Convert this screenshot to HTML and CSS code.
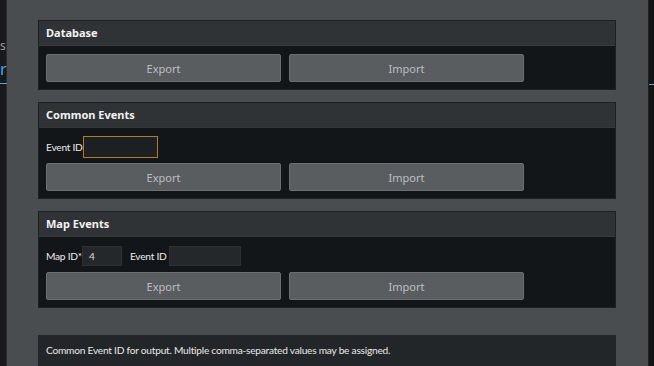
FILE: index.html
```html
<!DOCTYPE html>
<html>
<head>
<meta charset="utf-8">
<link rel="stylesheet" href="styles.css">
</head>
<body>
<div class="screen">
  <div class="bg-left">
    <span class="frag frag-s">s</span>
    <span class="frag frag-r">r</span>
    <span class="frag-line"></span>
  </div>
  <div class="dialog">
    <section class="panel">
      <header class="panel-head">Database</header>
      <div class="panel-body">
        <div class="btn-row">
          <button class="btn">Export</button>
          <button class="btn">Import</button>
        </div>
      </div>
    </section>

    <section class="panel">
      <header class="panel-head">Common Events</header>
      <div class="panel-body">
        <div class="field-row">
          <label class="lbl">Event ID</label>
          <div class="input input-focus input-w75"></div>
        </div>
        <div class="btn-row">
          <button class="btn">Export</button>
          <button class="btn">Import</button>
        </div>
      </div>
    </section>

    <section class="panel">
      <header class="panel-head">Map Events</header>
      <div class="panel-body">
        <div class="field-row">
          <label class="lbl">Map ID*</label>
          <div class="input input-w40">4</div>
          <label class="lbl lbl-gap">Event ID</label>
          <div class="input input-w72"></div>
        </div>
        <div class="btn-row">
          <button class="btn">Export</button>
          <button class="btn">Import</button>
        </div>
      </div>
    </section>

    <div class="info">Common Event ID for output. Multiple comma-separated values may be assigned.</div>
  </div>
  <div class="bg-right">
    <span class="frag-line-r"></span>
  </div>
</div>
</body>
</html>
```
FILE: styles.css
```css
* { box-sizing: border-box; }
html, body {
  margin: 0;
  padding: 0;
  width: 654px;
  height: 366px;
  overflow: hidden;
  background: #141618;
  font-family: "Noto Sans", "Open Sans", sans-serif;
}
.screen {
  display: flex;
  height: 366px;
}
.bg-left {
  width: 7px;
  flex: none;
  background: #17191b;
  position: relative;
  border-right: 1px solid #2a2c2e;
}
.frag {
  position: absolute;
  left: 0;
  font-size: 12px;
  line-height: 1;
}
.frag-s { top: 40px; color: #9a9a9a; }
.frag-r { top: 61px; color: #4aa8e8; font-size: 16px; }
.frag-line {
  position: absolute;
  left: 0;
  top: 83px;
  width: 7px;
  height: 1px;
  background: #4aa8e8;
}
.bg-right {
  width: 6px;
  flex: none;
  background: #121416;
  position: relative;
  border-left: 1px solid #1d1f21;
}
.frag-line-r {
  position: absolute;
  left: 0;
  top: 84px;
  width: 6px;
  height: 1px;
  background: #6aa8c0;
}
.dialog {
  width: 641px;
  flex: none;
  background: #4a4d50;
  padding: 20px 32px 0 31px;
  display: flex;
  flex-direction: column;
  gap: 12px;
}
.panel {
  border: 1px solid #1e2124;
  background: #121619;
}
.panel-head {
  height: 25px;
  background: #303336;
  border-bottom: 1px solid #383b3e;
  color: #f2f2f2;
  font-weight: bold;
  font-size: 11px;
  line-height: 24px;
  padding-left: 7px;
}
.panel-body {
  padding: 8px 7px 7px 7px;
  display: flex;
  flex-direction: column;
  gap: 5px;
}
.btn-row {
  display: flex;
  gap: 8px;
}
.btn {
  width: 235px;
  height: 28px;
  background: #5a5d60;
  border: 1px solid #6c6f72;
  border-radius: 2px;
  color: #bcbfc2;
  font-family: "Noto Sans", "Open Sans", sans-serif;
  font-size: 11px;
  padding: 0;
}
.field-row {
  display: flex;
  align-items: center;
  height: 22px;
}
.lbl {
  color: #ececec;
  font-family: Lato, "Noto Sans", sans-serif;
  font-size: 10.2px;
  letter-spacing: -0.25px;
  margin-right: 0;
}
.lbl-gap { margin-left: 8px; margin-right: 2px; }
.input {
  height: 20px;
  background: #25282b;
  border: 1px solid #2e3134;
  color: #dcdcdc;
  font-family: Lato, "Noto Sans", sans-serif;
  font-size: 10.2px;
  line-height: 18px;
  padding-left: 6px;
}
.input-focus {
  height: 22px;
  background: #1d2023;
  border: 1px solid #b07a2c;
}
.input-w75 { width: 75px; }
.input-w40 { width: 40px; }
.input-w72 { width: 72px; }
.info {
  margin-top: 15px;
  flex: 1;
  background: #232628;
  color: #e8e8e8;
  font-family: Lato, "Noto Sans", sans-serif;
  font-size: 10.2px;
  letter-spacing: -0.25px;
  padding: 9px 8px;
}
```
